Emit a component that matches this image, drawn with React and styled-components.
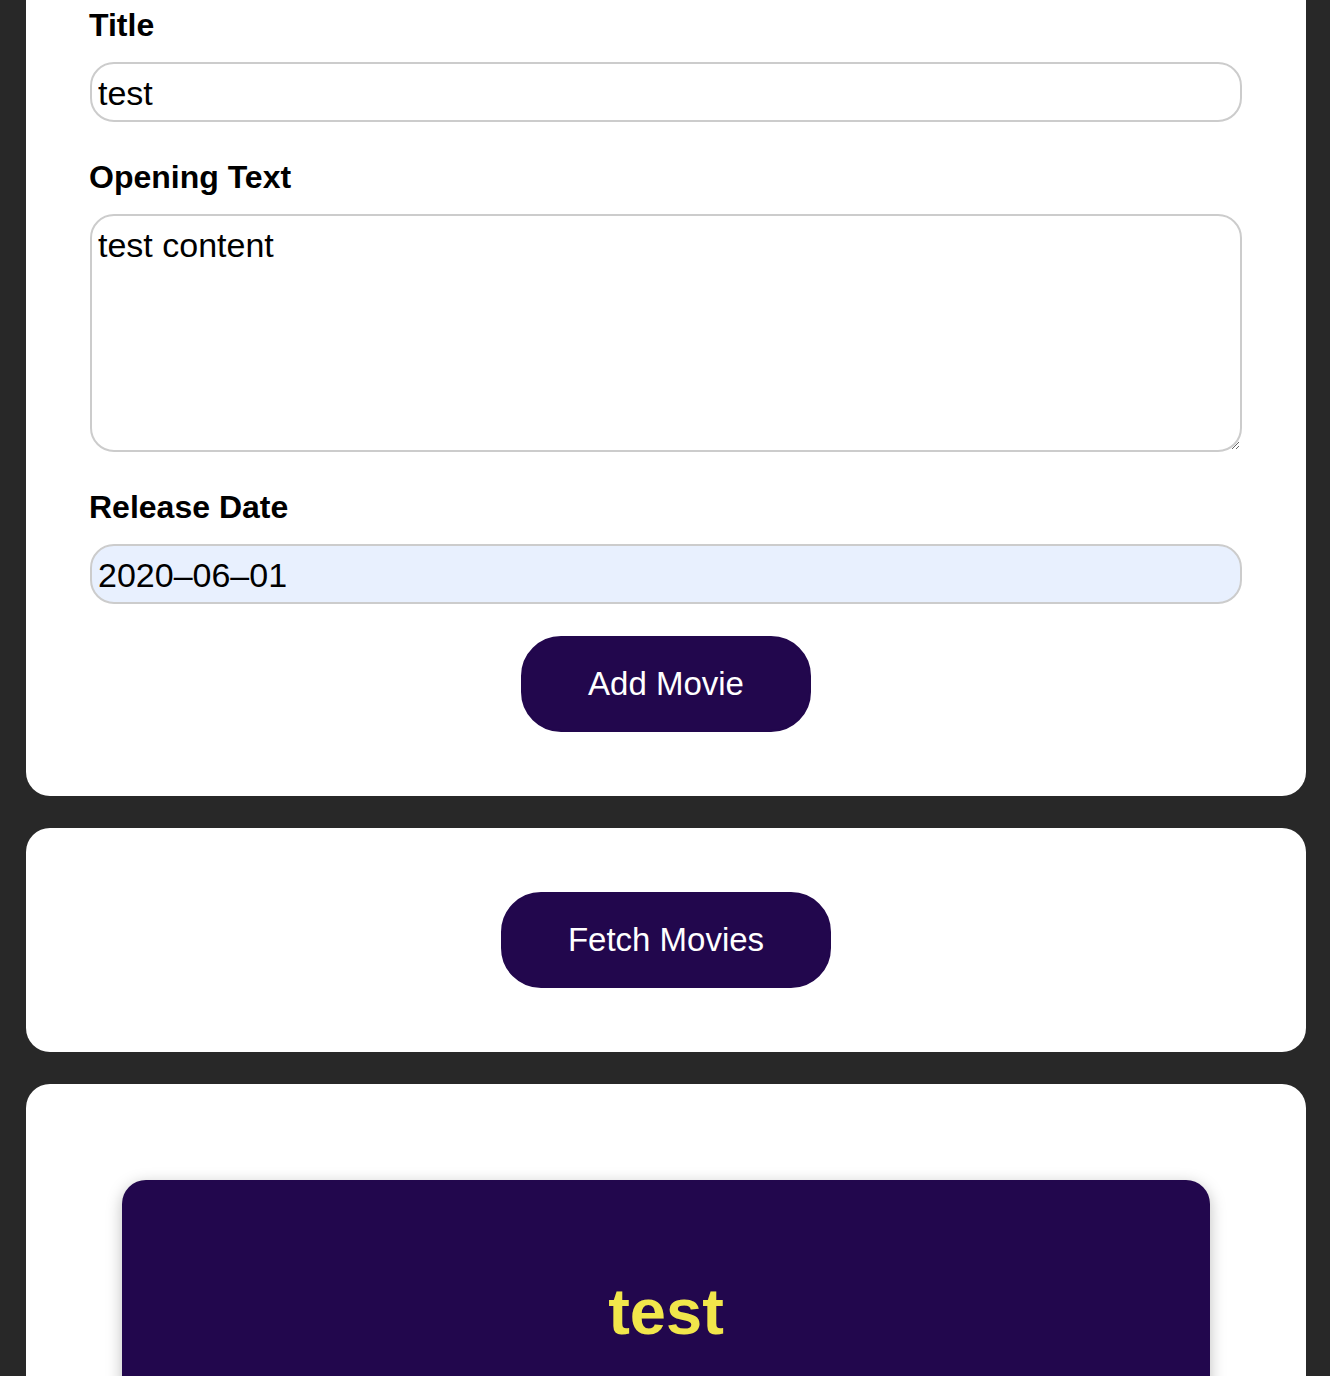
import React from "react";
import styled, { createGlobalStyle } from "styled-components";

const Global = createGlobalStyle`
  html, body { margin: 0; padding: 0; background: #282828; }
  body { font-family: "Liberation Sans", Arial, sans-serif; overflow: hidden; }
  * { box-sizing: border-box; }
`;

const Page = styled.main`
  padding: 0 24px 0 26px;
  height: 1376px;
  overflow: hidden;
`;

const Section = styled.section`
  width: 1280px;
  background: #ffffff;
  border-radius: 24px;
  padding: 64px;
  margin: ${(p) => (p.$first ? "-62px 0 32px" : "0 0 32px")};
  display: flex;
  flex-direction: column;
  align-items: ${(p) => (p.$center ? "center" : "stretch")};
`;

const Form = styled.form`
  display: flex;
  flex-direction: column;
`;

const Control = styled.div`
  display: flex;
  flex-direction: column;
  margin-bottom: 32px;
`;

const Label = styled.label`
  font-weight: bold;
  font-size: 32px;
  line-height: 44px;
  color: #000;
  margin: 1px 0 15px -1px;
`;

const fieldStyle = `
  font-family: "Liberation Sans", Arial, sans-serif;
  font-size: 34px;
  line-height: 40px;
  color: #000;
  border: 2px solid #cccccc;
  border-radius: 24px;
  padding: 9px 6px 7px;
  width: 100%;
  outline: none;
`;

const Input = styled.input`
  ${fieldStyle}
  height: 60px;
  background: ${(p) => (p.$autofill ? "#e8f0fe" : "#ffffff")};
`;

const TextArea = styled.textarea`
  ${fieldStyle}
  height: 238px;
  background: #ffffff;
  resize: vertical;
`;

const Actions = styled.div`
  display: flex;
  justify-content: center;
`;

const Button = styled.button`
  font-family: "Liberation Sans", Arial, sans-serif;
  font-size: 33px;
  line-height: 44px;
  height: 96px;
  padding: 0 65px;
  background: #22074d;
  border: 2px solid #22074d;
  color: #ffffff;
  border-radius: 40px;
  cursor: pointer;
`;

const List = styled.ul`
  list-style: none;
  margin: 0;
  padding: 0;
`;

const Movie = styled.li`
  margin: 32px;
  padding: 32px;
  height: 400px;
  text-align: center;
  background: #22074d;
  color: #ffffff;
  border-radius: 24px;
  box-shadow: 0 4px 16px rgba(0, 0, 0, 0.26);
`;

const MovieTitle = styled.h2`
  font-size: 65px;
  line-height: 90px;
  font-weight: bold;
  color: #f1e64b;
  margin: 55px 0 0;
`;

export default function App() {
  return (
    <>
      <Global />
      <Page>
        <Section $first>
          <Form onSubmit={(e) => e.preventDefault()}>
            <Control>
              <Label htmlFor="title">Title</Label>
              <Input id="title" type="text" defaultValue="test" />
            </Control>
            <Control>
              <Label htmlFor="opening-text">Opening Text</Label>
              <TextArea id="opening-text" defaultValue="test content" />
            </Control>
            <Control>
              <Label htmlFor="date">Release Date</Label>
              <Input id="date" type="text" defaultValue="2020–06–01" $autofill />
            </Control>
            <Actions>
              <Button type="submit">Add Movie</Button>
            </Actions>
          </Form>
        </Section>
        <Section $center>
          <Button type="button">Fetch Movies</Button>
        </Section>
        <Section>
          <List>
            <Movie>
              <MovieTitle>test</MovieTitle>
            </Movie>
          </List>
        </Section>
      </Page>
    </>
  );
}
